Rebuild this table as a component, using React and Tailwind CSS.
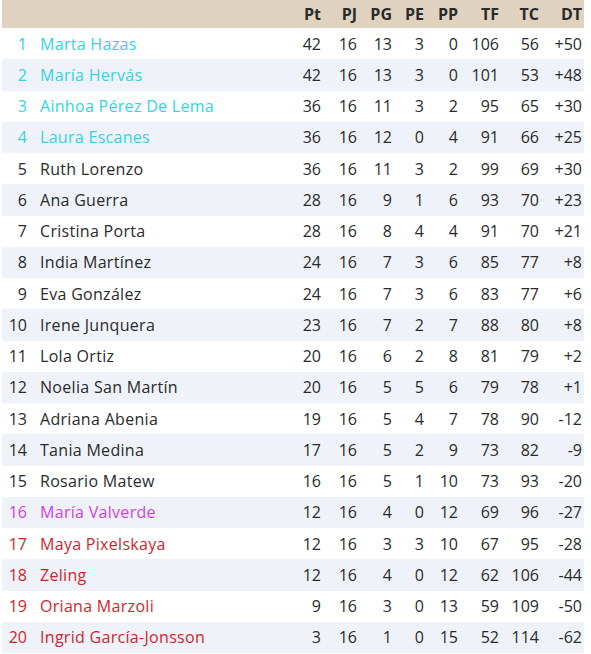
import React from 'react'

const ROWS = [
  ['Marta Hazas', 42, 16, 13, 3, 0, 106, 56, '+50', 'up'],
  ['María Hervás', 42, 16, 13, 3, 0, 101, 53, '+48', 'up'],
  ['Ainhoa Pérez De Lema', 36, 16, 11, 3, 2, 95, 65, '+30', 'up'],
  ['Laura Escanes', 36, 16, 12, 0, 4, 91, 66, '+25', 'up'],
  ['Ruth Lorenzo', 36, 16, 11, 3, 2, 99, 69, '+30'],
  ['Ana Guerra', 28, 16, 9, 1, 6, 93, 70, '+23'],
  ['Cristina Porta', 28, 16, 8, 4, 4, 91, 70, '+21'],
  ['India Martínez', 24, 16, 7, 3, 6, 85, 77, '+8'],
  ['Eva González', 24, 16, 7, 3, 6, 83, 77, '+6'],
  ['Irene Junquera', 23, 16, 7, 2, 7, 88, 80, '+8'],
  ['Lola Ortiz', 20, 16, 6, 2, 8, 81, 79, '+2'],
  ['Noelia San Martín', 20, 16, 5, 5, 6, 79, 78, '+1'],
  ['Adriana Abenia', 19, 16, 5, 4, 7, 78, 90, '-12'],
  ['Tania Medina', 17, 16, 5, 2, 9, 73, 82, '-9'],
  ['Rosario Matew', 16, 16, 5, 1, 10, 73, 93, '-20'],
  ['María Valverde', 12, 16, 4, 0, 12, 69, 96, '-27', 'play'],
  ['Maya Pixelskaya', 12, 16, 3, 3, 10, 67, 95, '-28', 'down'],
  ['Zeling', 12, 16, 4, 0, 12, 62, 106, '-44', 'down'],
  ['Oriana Marzoli', 9, 16, 3, 0, 13, 59, 109, '-50', 'down'],
  ['Ingrid García-Jonsson', 3, 16, 1, 0, 15, 52, 114, '-62', 'down'],
]

const HEAD = ['Pt', 'PJ', 'PG', 'PE', 'PP', 'TF', 'TC', 'DT']

// zone colours for the rank + name cells
const ZONE = {
  up: 'text-[#33d4e4]',
  play: 'text-[#d23ee4]',
  down: 'text-[#d21f2e]',
}

export default function App() {
  return (
    <div className="w-[591px] h-[654px] bg-white pl-[2px] font-['Open_Sans',sans-serif] text-[16px] text-[#2a2a2a]">
      <table className="w-[582px] table-fixed border-collapse">
        <colgroup>
          <col className="w-[30px]" />
          <col />
          <col className="w-[35px]" />
          <col className="w-[36px]" />
          <col className="w-[35px]" />
          <col className="w-[32px]" />
          <col className="w-[34px]" />
          <col className="w-[41px]" />
          <col className="w-[40px]" />
          <col className="w-[43px]" />
        </colgroup>
        <thead>
          <tr className="h-[28px] bg-[#dfd3c0]">
            <th />
            <th />
            {HEAD.map(h => (
              <th key={h} className="pr-[2px] text-right font-bold leading-none">{h}</th>
            ))}
          </tr>
        </thead>
        <tbody>
          {ROWS.map((r, i) => {
            const [name, ...rest] = r
            const stats = rest.slice(0, 8)
            const zone = ZONE[r[9]] || ''
            return (
              <tr key={name} className={`h-[31.25px] ${i % 2 ? 'bg-[#eff2f8]' : 'bg-white'}`}>
                <td className={`pr-[5px] text-right leading-none ${zone}`}>{i + 1}</td>
                <td className={`pl-[8px] whitespace-nowrap leading-none tracking-[0.3px] ${zone}`}>{name}</td>
                {stats.map((v, j) => (
                  <td key={j} className="pr-[2px] text-right leading-none">{v}</td>
                ))}
              </tr>
            )
          })}
        </tbody>
      </table>
    </div>
  )
}
